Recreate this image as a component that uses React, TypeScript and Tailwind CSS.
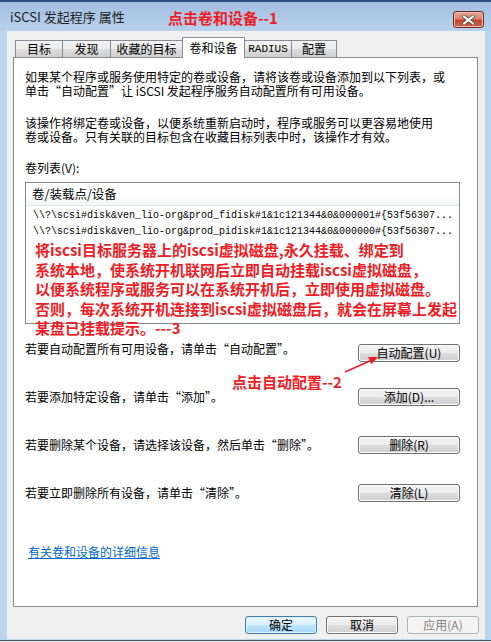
import React from "react";

const btnBase =
  "h-[18px] rounded-[3px] flex items-center justify-center text-[12px] leading-none";
const btnNormal =
  "border border-[#707070] bg-[linear-gradient(#f2f2f2_0%,#ebebeb_50%,#dddddd_51%,#cfcfcf_100%)] shadow-[inset_0_0_0_1px_#fcfcfc] text-black";

function Btn({ children, className = "" }: { children: React.ReactNode; className?: string }) {
  return <div className={`${btnBase} ${btnNormal} ${className}`}>{children}</div>;
}

function Tab({ label, w, selected, mono }: { label: string; w: string; selected?: boolean; mono?: boolean }) {
  if (selected) {
    return (
      <div
        className={`${w} h-[21px] -mb-[1px] -ml-[1px] relative z-10 bg-white border-t border-l border-r border-[#898c95] flex items-start justify-center pt-[2px] text-[12px] leading-[16px] text-black`}
      >
        {label}
      </div>
    );
  }
  return (
    <div
      className={`${w} h-[17px] -ml-[1px] first:ml-0 border-t border-l border-r border-[#898c95] bg-[linear-gradient(#f3f3f3_0%,#ebebeb_50%,#dddddd_51%,#cfcfcf_100%)] flex items-center justify-center text-black ${
        mono ? "font-['Liberation_Mono',monospace] text-[11px] leading-[14px]" : "text-[12px] leading-[14px]"
      }`}
    >
      {label}
    </div>
  );
}

export default function App() {
  return (
    <div className="w-[491px] h-[642px] relative overflow-hidden bg-[#bcd5ee] flex flex-col font-['Noto_Sans_CJK_SC',sans-serif] text-black">
      {/* Title bar */}
      <div className="h-[31px] shrink-0 border-t-2 border-[#2c4f80] bg-[linear-gradient(#a2bfe1,#b9d1ec)] flex items-center">
        <span className="ml-[10px] text-[13px] leading-[16px] text-[#1e1e1e]">iSCSI 发起程序 属性</span>
      </div>

      {/* Body */}
      <div className="flex shrink-0">
        <div className="w-[7px] shrink-0" />
        <div className="w-[478px] h-[608px] bg-[#f0f0f0] flex flex-col pt-[6px]">
          {/* Tabs */}
          <div className="h-[20px] flex items-end pl-[8px]">
            <Tab label="目标" w="w-[48px]" />
            <Tab label="发现" w="w-[49px]" />
            <Tab label="收藏的目标" w="w-[73px]" />
            <Tab label="卷和设备" w="w-[63px]" selected />
            <Tab label="RADIUS" w="w-[48px]" mono />
            <Tab label="配置" w="w-[46px]" />
          </div>

          {/* Panel */}
          <div className="ml-[6px] w-[465px] h-[550px] border border-[#898c95] bg-white pt-[12px] pl-[11px] pr-[17px] flex flex-col text-[12px] leading-[14px]">
            <div className="whitespace-nowrap">
              <div>如果某个程序或服务使用特定的卷或设备，请将该卷或设备添加到以下列表，或</div>
              <div>单击“自动配置”让 iSCSI 发起程序服务自动配置所有可用设备。</div>
            </div>
            <div className="mt-[18px] whitespace-nowrap">
              <div>该操作将绑定卷或设备，以便系统重新启动时，程序或服务可以更容易地使用</div>
              <div>卷或设备。只有关联的目标包含在收藏目标列表中时，该操作才有效。</div>
            </div>
            <p className="mt-[17px]">卷列表(V):</p>

            {/* List box */}
            <div className="mt-[7px] h-[142px] border border-[#828790] bg-white flex flex-col">
              <div className="h-[23px] shrink-0 border-b border-[#e2e3e5] bg-[linear-gradient(#ffffff_0%,#ffffff_60%,#f3f4f5_100%)] flex items-center pl-[6px] text-[12.5px] leading-[16px]">
                卷/装载点/设备
              </div>
              <div className="mt-[2px] font-['Liberation_Mono',monospace] text-[10px] leading-[16px] pl-[7px] whitespace-nowrap">
                <div>{"\\\\?\\scsi#disk&ven_lio-org&prod_fidisk#1&1c121344&0&000001#{53f56307..."}</div>
                <div>{"\\\\?\\scsi#disk&ven_lio-org&prod_pidisk#1&1c121344&0&000000#{53f56307..."}</div>
              </div>
            </div>

            {/* Rows */}
            <div className="mt-[18px] flex items-center justify-between">
              <span className="mb-[8px]">若要自动配置所有可用设备，请单击“自动配置”。</span>
              <Btn className="w-[102px]">自动配置(U)</Btn>
            </div>
            <div className="mt-[24px] flex items-center justify-between">
              <span>若要添加特定设备，请单击“添加”。</span>
              <Btn className="w-[102px]">添加(D)...</Btn>
            </div>
            <div className="mt-[30px] flex items-center justify-between">
              <span>若要删除某个设备，请选择该设备，然后单击“删除”。</span>
              <Btn className="w-[102px]">删除(R)</Btn>
            </div>
            <div className="mt-[30px] flex items-center justify-between">
              <span>若要立即删除所有设备，请单击“清除”。</span>
              <Btn className="w-[102px]">清除(L)</Btn>
            </div>

            <div className="mt-[43px] ml-[3px]">
              <span className="text-[#0066cc] underline">有关卷和设备的详细信息</span>
            </div>
          </div>

          {/* Bottom buttons */}
          <div className="mt-[9px] flex justify-end gap-[9px] pr-[6px]">
            <div className={`${btnBase} w-[72px] border border-[#3c7fb1] bg-[linear-gradient(#eaf6fd_0%,#d9f0fc_50%,#bee6fd_51%,#a7d9f5_100%)] shadow-[inset_0_0_0_1px_#dff2fc]`}>
              确定
            </div>
            <Btn className="w-[72px]">取消</Btn>
            <div className={`${btnBase} w-[72px] border border-[#adb2b5] bg-[#f4f4f4] text-[#838383]`}>应用(A)</div>
          </div>
        </div>
        <div className="w-[6px] shrink-0" />
      </div>
      <div className="h-[1px] shrink-0 bg-[#bcd5ee]" />
      <div className="h-[1px] shrink-0 bg-[#4b5663]" />
      <div className="flex-1 bg-[#dfe6ee]" />

      {/* Close button */}
      <div className="absolute left-[453px] top-[11px] w-[31px] h-[17px] rounded-[3px] border border-[#6a2b22] bg-[linear-gradient(#e6a796_0%,#d98470_45%,#c44429_55%,#d0654a_100%)] shadow-[inset_0_0_0_1px_#eebcb0] flex items-center justify-center">
        <svg width="13" height="10" viewBox="0 0 13 10">
          <path d="M2 1.5 L11 8.5 M11 1.5 L2 8.5" stroke="#4b4b4b" strokeWidth="3.6" strokeLinecap="square" />
          <path d="M2 1.5 L11 8.5 M11 1.5 L2 8.5" stroke="#ffffff" strokeWidth="2" strokeLinecap="square" />
        </svg>
      </div>

      {/* Annotations */}
      <div className="absolute left-[168px] top-[8px] text-[15px] leading-[20px] font-bold text-[#ef1c25] whitespace-nowrap">
        点击卷和设备--1
      </div>
      <div className="absolute left-[35px] top-[240px] text-[15px] leading-[19.5px] font-bold text-[#ef1c25] whitespace-nowrap">
        将iscsi目标服务器上的iscsi虚拟磁盘,永久挂载、绑定到
        <br />
        系统本地，使系统开机联网后立即自动挂载iscsi虚拟磁盘，
        <br />
        以便系统程序或服务可以在系统开机后，立即使用虚拟磁盘。
        <br />
        否则，每次系统开机连接到iscsi虚拟磁盘后，就会在屏幕上发起
        <br />
        某盘已挂载提示。---3
      </div>
      <div className="absolute left-[232px] top-[372px] text-[15px] leading-[20px] font-bold text-[#ef1c25] whitespace-nowrap">
        点击自动配置--2
      </div>
      <svg className="absolute left-0 top-0 pointer-events-none" width="491" height="642">
        <line x1="345" y1="372" x2="371" y2="360.5" stroke="#ef1c25" strokeWidth="1.6" />
        <polygon points="378,357 371.4,364.3 368.2,357.1" fill="#ef1c25" />
      </svg>
    </div>
  );
}
